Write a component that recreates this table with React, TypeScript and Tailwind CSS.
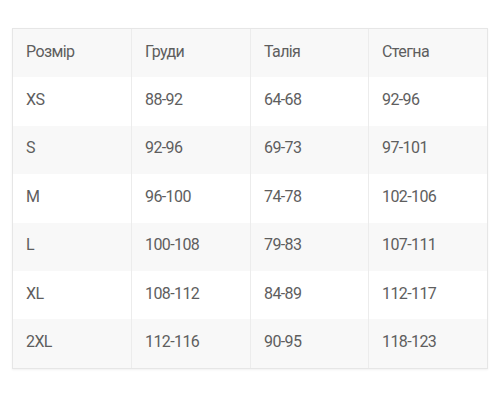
const head = ["Розмір", "Груди", "Талія", "Стегна"];
const rows = [
  ["XS", "88-92", "64-68", "92-96"],
  ["S", "92-96", "69-73", "97-101"],
  ["M", "96-100", "74-78", "102-106"],
  ["L", "100-108", "79-83", "107-111"],
  ["XL", "108-112", "84-89", "112-117"],
  ["2XL", "112-116", "90-95", "118-123"],
];

export default function App() {
  const all = [head, ...rows];
  return (
    <div className="w-[500px] h-[400px] bg-white pt-[28px] px-[12px]" style={{ fontFamily: "Roboto, sans-serif" }}>
      <div className="w-[476px] border border-[#e6e6e6] shadow-[0_1px_2px_rgba(0,0,0,0.06)]">
        {all.map((r, i) => (
          <div
            key={i}
            className={`grid grid-cols-[119px_119px_118px_1fr] h-[48.4px] ${i % 2 === 0 ? "bg-[#f8f8f8]" : "bg-white"}`}
          >
            {r.map((c, j) => (
              <div
                key={j}
                className={`flex items-center pl-[13px] pb-[3px] text-[16px] tracking-[-0.6px] text-[#5e5e5e] ${j < 3 ? "border-r border-[#ececec]" : ""}`}
              >
                {c}
              </div>
            ))}
          </div>
        ))}
      </div>
    </div>
  );
}
